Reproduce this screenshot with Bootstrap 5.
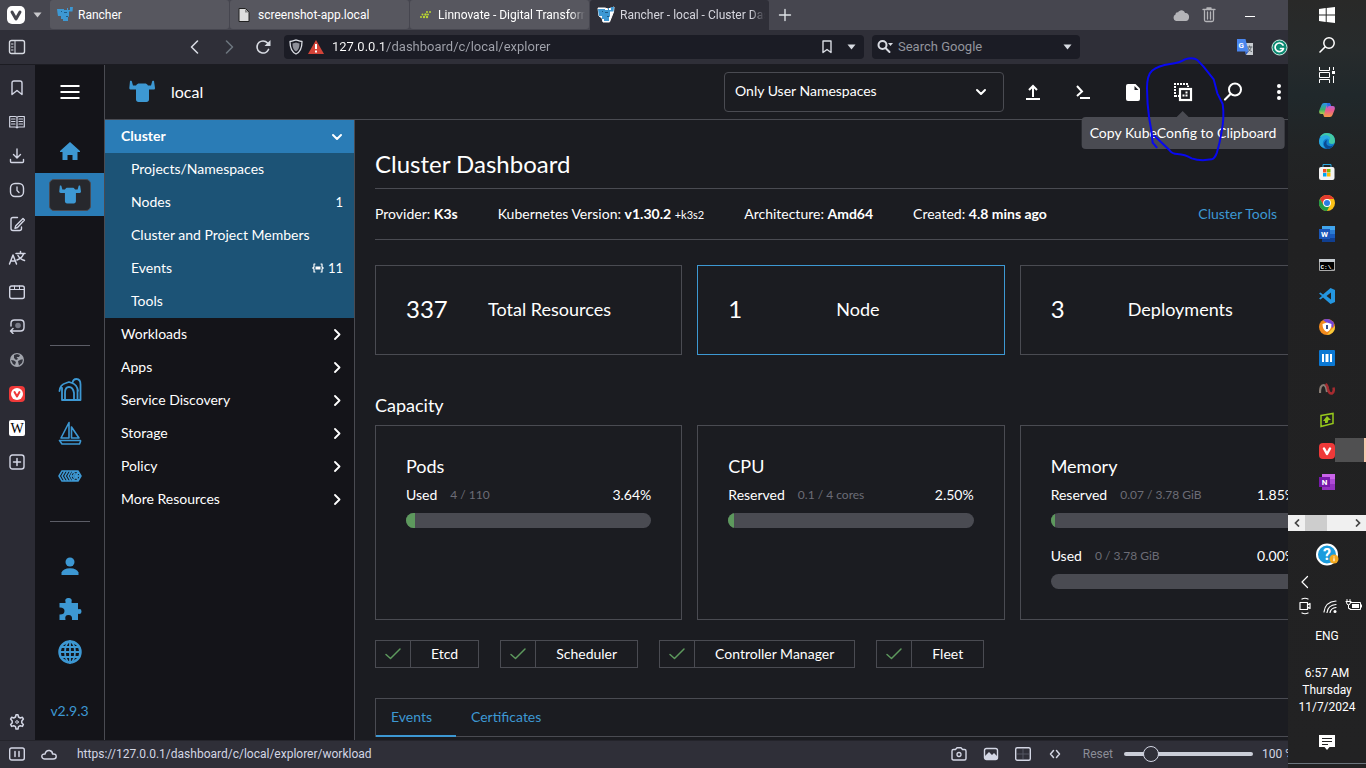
<!DOCTYPE html>
<html lang="en" data-bs-theme="dark">
<head>
<meta charset="utf-8">
<meta name="viewport" content="width=device-width, initial-scale=1">
<title>Rancher - local - Cluster Dashboard</title>
<link rel="stylesheet" href="https://cdn.jsdelivr.net/npm/bootstrap@5.3.0/dist/css/bootstrap.min.css">
<style>
:root{--line:#4a4b52;--page:#1b1c21;--rail:#141419;--chrome:#2f2f38;--panel:#2b2b34;--blue:#3d98d3;--primary:#2a7cb6;--lato:Lato,"Open Sans",sans-serif;--ui:Roboto,"Open Sans",sans-serif}
body{font:12px/18px var(--ui);color:#fff;background:var(--page)}
svg{display:block;flex:none}
button{background:none;border:0;padding:0;color:inherit;font:inherit;display:flex;align-items:center;justify-content:center}
a{text-decoration:none;color:inherit}
h1,h2,h3,p,ul{margin:0;padding:0;font-weight:400}
ul{list-style:none}
.i16{width:16px;height:16px}.i18{width:18px;height:18px}.i20{width:20px;height:20px}.i24{width:24px;height:24px}.i26{width:26px;height:26px}
.ln{fill:none;stroke:currentColor;stroke-linecap:round;stroke-linejoin:round}
/* browser chrome */
.tabstrip{height:30px;background:#46464f}
.vmenu{width:50px;gap:8px;padding-left:7px;justify-content:flex-start}
.btab{width:179px;height:29px;background:#57575f;border-radius:3px;margin-right:1px;padding:0 4px 0 7px;gap:5px;justify-content:flex-start}
.btab.current{background:var(--chrome);height:30px;color:#d5d5dd;border-radius:3px 3px 0 0}
.btab span{white-space:nowrap;overflow:hidden}
.btab .fades{-webkit-mask-image:linear-gradient(90deg,#000 90%,transparent);mask-image:linear-gradient(90deg,#000 90%,transparent)}
.winbtns{margin-right:110px;gap:12px;color:#b4b4b8}
.toolbar{height:35px;background:var(--chrome);border-bottom:1px solid #1c1c22;color:#d8dbe2}
.navbtns{margin-left:152px;width:102px}
.navbtns button{width:34px}
.field{height:24px;background:#1b1c25;border-radius:4px}
.field input{background:transparent;border:0;outline:0;min-width:0;font:13px/20px var(--ui);color:#a2a4ad;padding:0}
.field input::placeholder{color:#93959d}
.urlbox{background:linear-gradient(90deg,#fff 53px,#a2a4ad 53px)!important;-webkit-background-clip:text!important;background-clip:text!important;-webkit-text-fill-color:transparent}
.searchbox{width:208px}
.exts{width:286px;padding-left:157px;gap:17px}
.panelbar{width:35px;background:var(--panel);color:#d3d6e4;padding:6px 0 1px}
.panelbar button{width:34px;height:34px}
.statusbar{height:28px;background:var(--chrome);border-top:1px solid #24242b;color:#d3d6e4;padding:0 72px 2px 1px}
.statusbar button{width:32px}
.zoomer{-webkit-appearance:none;appearance:none;width:129px;height:18px;background:transparent;margin:0 9px 0 11px}
.zoomer::-webkit-slider-runnable-track{height:4px;border-radius:2px;background:#cbced8}
.zoomer::-webkit-slider-thumb{-webkit-appearance:none;width:16px;height:16px;margin-top:-6px;border-radius:50%;background:var(--chrome);border:1px solid #d3d6e4}
/* dashboard */
.rancher{font-family:var(--lato);font-size:14px;line-height:20px}
.rail{width:70px;background:var(--rail);border-right:1px solid var(--line);color:var(--blue)}
.rail a,.rail>button{height:43px;display:flex;align-items:center;justify-content:center}
.rail .here{background:var(--primary)}
.here span{background:#27282d;border:1px solid #4a4b52;border-radius:5px;padding:4px 9px}
.rail .burger{height:54px;margin-bottom:11px;color:#fff}
.rail hr{width:40px;margin:24px auto 22px;border-color:#5c5d66;opacity:1}
.rail .here+hr{margin-top:129px}
.apphead{height:55px;border-bottom:1px solid var(--line)}
.apphead h2{font-size:16px;line-height:20px}
.nsbtn{width:280px;height:40px;border:1px solid var(--line);border-radius:4px;padding:0 16px 2px 10px;margin-right:4px;justify-content:space-between}
.hbtn{width:50px;height:54px;position:relative}
.hbtn.dots{width:42px;margin-right:66px}
.tipbox{position:absolute;top:52px;left:50%;transform:translateX(-50%);background:#4a4b52;border-radius:4px;padding:6px 8px;white-space:nowrap;z-index:3}
.tipbox::before{content:"";position:absolute;left:50%;top:-6px;margin-left:-6px;border:6px solid transparent;border-top:0;border-bottom-color:#4a4b52}
.sidenav{width:250px;background:var(--rail);border-right:1px solid var(--line)}
.sidenav a{display:flex;align-items:center;justify-content:space-between;height:33px;padding:0 11px 2px 16px}
.sidenav ul ul{background:#1c5376}
.sidenav ul ul a{padding:0 11px 2px 26px}
.sidenav .open{background:var(--primary);font-weight:700}
.sidenav small{font-size:13px}
.pane{padding:29px 19px 0 20px;margin-right:20px}
.pane h1{font-size:24px;line-height:30px;padding-bottom:9px;border-bottom:1px solid var(--line)}
.facts{height:51px;gap:40px;border-bottom:1px solid var(--line);margin-bottom:25px}
.facts a{color:var(--blue);margin-right:50px}
.facts small{font-size:11px}
.tiles{display:grid;grid-template-columns:repeat(3,1fr);gap:15px}
.tile{border:1px solid var(--line)}
.total{height:90px;padding:0 30px 2px;font-size:18px}
.total.active{border-color:var(--blue)}
.total b{font-size:24px;font-weight:400}
.blk{font-size:18px;line-height:20px;margin:40px 0 10px}
.meter{height:195px;padding:29px 30px}
.meter h3{font-size:18px;line-height:22px;margin-bottom:8px}
.meter .d-flex{line-height:20px;margin-bottom:8px}
.meter small{font-size:12px;color:#6c6c76;margin-left:13px}
.pbar{height:15px;border-radius:8px;background:#4a4b52;overflow:hidden;margin-bottom:18px}
.pbar div{height:100%;background:#5d995d}
.svcs{gap:21px;margin-top:20px}
.svc{height:28px;border:1px solid var(--line)}
.svc svg{width:35px;height:26px;border-right:1px solid var(--line);padding:4px 8px;color:#5d995d}
.svc span{padding:0 20px}
.tabset{border:1px solid var(--line);border-bottom:0;margin-top:30px;color:var(--blue)}
.tabset div{border-bottom:1px solid var(--line)}
.tabset a{height:38px;padding:8px 15px;margin-bottom:-1px}
.tabset .on{width:80px;border-bottom:2px solid var(--blue)}
/* system taskbar */
.taskbar{position:absolute;right:0;top:0;bottom:0;width:78px;background:linear-gradient(#292928 0,#272b2c 50px,#20282b 95px,#222425 150px,#212122 220px,#222223 100%);z-index:5}
.taskbar .sys{height:30px;width:78px}
.taskbar .app{height:31px;width:78px;position:relative}
.app.running::after{content:"";position:absolute;left:47px;right:0;top:3px;height:24px;background:#505051;border-right:2px solid #f8c9ad}
.hscroll{height:16px;background:#f0f0f0;margin-top:18px;color:#555}
.hscroll i{width:22px;height:16px;background:#cdcdcd;margin-right:22px}
.hscroll button{width:17px}
.clock{line-height:17px;margin-top:20px}
.pen{position:absolute;top:55px;right:139px;width:84px;height:108px;z-index:6;pointer-events:none}
</style>
</head>
<body>
<svg class="position-absolute" width="0" height="0" xmlns="http://www.w3.org/2000/svg">
<linearGradient id="cpa" x1="0" y1="0" x2="0" y2="1"><stop offset="0" stop-color="#2a8ff0"/><stop offset=".5" stop-color="#35b46c"/><stop offset="1" stop-color="#f4d13c"/></linearGradient>
<linearGradient id="cpb" x1="0" y1="0" x2="0" y2="1"><stop offset="0" stop-color="#a765e6"/><stop offset=".5" stop-color="#e95b90"/><stop offset="1" stop-color="#f59a45"/></linearGradient>
<symbol id="bull" viewBox="0 0 26 24"><path fill="currentColor" d="M1 1c1-.6 2 0 2 1l1 3.500h3C8 4 9 3.500 10 3.500h6c1.200 0 2 .5 3 2h3l1-3.500c0-1 1-1.600 2-1l1 7c0 1-.5 1.500-1.500 1.500H20v10c0 1.500-1 2.500-2.500 2.500h-8C8 22 7 21 7 19.500v-10H2C1 9.500.3 9 .3 8z"/></symbol>
<symbol id="cow" viewBox="0 0 16 16"><path fill="#3d98d3" d="M0 2h7v1h3V1h1v2h2V0h1l2-.500-.5 5H12v5l-1 .5v4H6V12H4V9H1L.500 6z"/><path fill="#1d5b87" d="M4 4h1v1H4zM7 5h3v1H7zM9 9h2v1H9z"/></symbol>
<symbol id="mag" viewBox="0 0 20 20"><circle cx="12" cy="7.500" r="6" class="ln" stroke-width="2"/><path class="ln" stroke-width="2.200" d="M7.500 12L2 17.500"/></symbol>
<symbol id="cr" viewBox="0 0 12 12"><path class="ln" stroke-width="1.800" d="M4 2L8.500 6.500 4 11"/></symbol>
<symbol id="cd" viewBox="0 0 12 12"><path class="ln" stroke-width="2" d="M2 5l4 4 4-4"/></symbol>
<symbol id="ck" viewBox="0 0 18 18"><path class="ln" stroke-width="1.500" d="M2 9.500l4.500 4L16 4"/></symbol>
</svg>

<div class="position-relative vh-100 overflow-hidden">
<div class="d-flex flex-column h-100">

<header>
<div class="tabstrip d-flex">
 <button class="vmenu" aria-label="Vivaldi menu"><svg class="i18" viewBox="0 0 18 18"><rect width="18" height="18" rx="5" fill="#fff"/><path d="M5 6l4 7 4-7" class="ln" style="stroke:#46464f" stroke-width="3"/></svg><svg width="9" height="6" viewBox="0 0 9 6"><path fill="#c8c8cc" d="M.5.5h8l-4 5z"/></svg></button>
 <button class="btab"><svg class="i16"><use href="#cow"/></svg><span>Rancher</span></button>
 <button class="btab ps-2 gap-2"><svg width="12" height="14" viewBox="0 0 12 14"><path fill="#ddd" stroke="#222" d="M1 .5h6.500L11 4v9.500H1z"/><path fill="#888" d="M7 1v3.500h4z"/></svg><span>screenshot-app.local</span></button>
 <button class="btab"><svg class="i16" viewBox="0 0 16 16"><g fill="#b9d432"><circle cx="4" cy="10" r="1"/><circle cx="7" cy="10" r="1.200"/><circle cx="10" cy="10" r="1.200"/><circle cx="5.500" cy="7.500" r="1"/><circle cx="8.500" cy="7.500" r="1.200"/><circle cx="11" cy="7.500" r="1"/><circle cx="10" cy="5" r="1"/><circle cx="13" cy="5" r="1"/></g></svg><span class="fades">Linnovate - Digital Transform</span></button>
 <button class="btab current"><svg class="i18" viewBox="-1 -1 18 18"><path d="M0 1h7l3 1 6-2-.5 5-2 5-2 5H5L4 11 1 9z" fill="#fff" stroke="#fff"/><use href="#cow" width="16" height="16"/></svg><span class="fades">Rancher - local - Cluster Das</span></button>
 <button class="px-2 text-secondary-emphasis" aria-label="New tab"><svg width="14" height="14" viewBox="0 0 14 14"><path class="ln" d="M7 1.500v11M1.500 7h11" stroke-width="1.400"/></svg></button>
 <div class="winbtns d-flex ms-auto">
  <button aria-label="Sync"><svg width="18" height="14" viewBox="0 0 18 14"><path fill="currentColor" d="M4 13a3.500 3.500 0 01-.5-6.500C3.500 5 5 4 6 4.500 7 1.500 12 1 13 5c3 0 4.500 2 4 5-.4 2-1.500 3-3 3z"/></svg></button>
  <button aria-label="Closed tabs"><svg width="14" height="16" viewBox="0 0 14 16"><path class="ln" stroke-width="1.300" d="M1 2.500h12M5 2V1h4v1M2.500 4v9c0 1 .5 1.500 1.500 1.500h6c1 0 1.500-.5 1.500-1.500V4M5.500 5v7M8.500 5v7"/></svg></button>
  <button class="text-white ms-3" aria-label="Minimize"><svg width="12" height="12" viewBox="0 0 12 12"><path fill="currentColor" d="M1 7h10v1H1z"/></svg></button>
 </div>
</div>
<div class="toolbar d-flex align-items-center">
 <button class="ps-2" aria-label="Panels"><svg width="18" height="16" viewBox="0 0 18 16"><rect x="1.500" y="1.500" width="15" height="13" rx="2" class="ln" stroke-width="1.400"/><path class="ln" d="M7 2v12M3.500 5h1.500M3.500 8h1.500M3.500 11h1.500"/></svg></button>
 <div class="navbtns d-flex flex-shrink-0">
  <button aria-label="Back"><svg class="i16" viewBox="0 0 16 16"><path class="ln" stroke-width="1.600" d="M10.500 2L4.500 8l6 6"/></svg></button>
  <button class="text-secondary" aria-label="Forward"><svg class="i16" viewBox="0 0 16 16"><path class="ln" stroke-width="1.600" d="M5.500 2l6 6-6 6"/></svg></button>
  <button aria-label="Reload"><svg class="i16" viewBox="0 0 16 16"><path class="ln" stroke-width="1.700" d="M13.500 10.500A6 6 0 118 2c2 0 3.500.8 4.500 2"/><path fill="currentColor" d="M15.500 1v6h-6z"/></svg></button>
 </div>
 <div class="field d-flex align-items-center flex-fill ms-1 ps-1 gap-1 me-2">
  <svg class="i16" viewBox="0 0 16 16"><path class="ln" stroke-width="1.300" d="M2 2.500C5 2.500 7 1 8 1s3 1.500 6 1.500C14 9 12.500 13 8 15 3.500 13 2 9 2 2.500z"/><path fill="#8e9099" d="M4.500 4.500C6 4.500 7 3.500 8 3.500s2 1 3.500 1c0 4-1 6.500-3.500 8-2.500-1.500-3.500-4-3.500-8z"/></svg>
  <svg class="i16" viewBox="0 0 16 16"><path fill="#d34338" d="M8 1l8 14H0z"/><path stroke="#fff" stroke-width="2" d="M8 5v5M8 11.500v2"/></svg>
  <input class="urlbox flex-fill ms-1" aria-label="Address" value="127.0.0.1/dashboard/c/local/explorer">
  <button aria-label="Bookmark"><svg class="i16" viewBox="0 0 16 16"><path class="ln" stroke-width="1.400" d="M4 2h8v11.500L8 10.500l-4 3z"/></svg></button>
  <button class="px-2" aria-label="Bookmark list"><svg width="9" height="6" viewBox="0 0 9 6"><path fill="currentColor" d="M.5.5h8l-4 5z"/></svg></button>
 </div>
 <div class="field searchbox d-flex align-items-center ps-1">
  <svg width="18" height="16" viewBox="0 0 18 16"><circle cx="6.500" cy="6" r="4" class="ln" stroke-width="2"/><path class="ln" stroke-width="2" d="M9.500 9l4 4"/><path fill="currentColor" d="M12 4h5l-2.500 3z"/></svg>
  <input class="flex-fill ms-1" aria-label="Search" placeholder="Search Google">
  <button class="px-2" aria-label="Search engines"><svg width="9" height="6" viewBox="0 0 9 6"><path fill="currentColor" d="M.5.5h8l-4 5z"/></svg></button>
 </div>
 <div class="exts d-flex">
  <button aria-label="Translate"><svg width="17" height="17" viewBox="0 0 17 17"><path fill="#c9ccd1" d="M7 4h9v12H9z"/><path class="ln" style="stroke:#5e666c" d="M10 8h5M12.500 7v1M14 8c0 2-1.500 4-3 4.500M11 9c.5 1.500 2 3 3.500 3.500"/><path fill="#4a86ee" d="M0 0h8.500l3 12.500H0z"/><path fill="#2b5fc9" d="M9 16l2.500-3.500H8z"/><text x="1.500" y="9" font-size="8" font-weight="700" fill="#fff">G</text></svg></button>
  <button aria-label="Grammarly"><svg width="17" height="17" viewBox="0 0 17 17"><circle cx="8.500" cy="8.500" r="7.500" fill="#0c8a72" stroke="#cdeee4"/><path class="ln" style="stroke:#fff" stroke-width="1.700" d="M12 6a4.300 4.300 0 10.500 3.500H9.500"/></svg></button>
 </div>
</div>
</header>

<div class="d-flex flex-fill overflow-hidden">
<aside class="panelbar d-flex flex-column flex-shrink-0" aria-label="Panels">
 <button aria-label="Bookmarks"><svg class="i16" viewBox="0 0 16 16"><path class="ln" stroke-width="1.400" d="M3 3q0-2 2-2h6q2 0 2 2v11.500L8 10.500l-5 4z"/></svg></button>
 <button aria-label="Reading list"><svg class="i16" viewBox="0 0 16 16"><path class="ln" stroke-width="1.200" d="M.7 2.500h5.500q1.800 0 1.800 1v10.500q0-1-1.800-1H.7zM15.300 2.500H9.800Q8 2.500 8 3.500M15.300 2.500V13H9.800Q8 13 8 14M2.500 5H6M2.500 7.500H6M2.500 10H6M10 5h3.500M10 7.500h3.500M10 10h3.500"/></svg></button>
 <button aria-label="Downloads"><svg class="i16" viewBox="0 0 16 16"><path class="ln" stroke-width="1.400" d="M8 1v8.500M4.500 6.500L8 10l3.500-3.500M1.500 11.500v2q0 1 1 1h11q1 0 1-1v-2"/></svg></button>
 <button aria-label="History"><svg class="i16" viewBox="0 0 16 16"><rect x="1.500" y="1.500" width="13" height="13" rx="4.500" class="ln" stroke-width="1.400"/><path class="ln" stroke-width="1.300" d="M8 5v3.500l2 2"/></svg></button>
 <button aria-label="Notes"><svg class="i16" viewBox="0 0 16 16"><path class="ln" stroke-width="1.400" d="M8.500 1.500H4q-2 0-2 2v9q0 2 2 2h6.500q2 0 2-2V11M14 2.500l1.500 1.500-7 7.500-2.500.8.800-2.500z"/></svg></button>
 <button aria-label="Translate"><svg class="i18" viewBox="0 0 18 18"><path class="ln" stroke-width="1.500" d="M1.500 15l3.500-9 3.500 9M2.700 12h4.600M8 4.500h9M12.500 2.500v2M9 11c4-1.500 6-4 6.500-6.500M10 6.500c1 2 3.500 4 6.500 5"/></svg></button>
 <button aria-label="Window"><svg class="i16" viewBox="0 0 16 16"><rect x=".7" y="2" width="14.600" height="12.500" rx="2" class="ln" stroke-width="1.400"/><path class="ln" d="M1 5.500h14M5.500 2v3M10.500 2v3"/></svg></button>
 <button aria-label="Sessions"><svg class="i16" viewBox="0 0 16 16"><path class="ln" stroke-width="1.400" d="M2 8V5.500Q2 2 5.500 2h6Q15 2 15 5.500v4Q15 13 11.500 13H2M4 10.500L1.500 13 4 15.500"/><circle cx="9" cy="7.500" r="2.800" fill="#777985"/></svg></button>
 <button aria-label="Web panel"><svg class="i16" viewBox="0 0 16 16"><circle cx="8" cy="8" r="7" fill="#a2a5ad"/><path fill="#33343d" d="M2 8l3 .5 2 1.500-1 3-2-1zM5 3l3-1 3 1-1 2H7.500L9 7 7 8 5 6zM9 9l3-1.500h2L13 11l-3 2.500-.5-2z"/></svg></button>
 <button aria-label="Vivaldi"><svg class="i16" viewBox="0 0 16 16"><rect width="16" height="16" rx="4" fill="#ef3939"/><circle cx="8" cy="8" r="6" fill="#fff"/><path class="ln" style="stroke:#ef3939" stroke-width="2" d="M5.500 6L8 10.500 10.500 6"/></svg></button>
 <button aria-label="Wikipedia"><svg class="i16" viewBox="0 0 16 16"><rect width="16" height="16" rx="2" fill="#fff"/><text x="8" y="12.500" font-family="Liberation Serif" font-size="14" text-anchor="middle" fill="#000">W</text></svg></button>
 <button aria-label="Add panel"><svg class="i16" viewBox="0 0 16 16"><rect x="1" y="1" width="14" height="14" rx="2.500" class="ln" stroke-width="1.400"/><path class="ln" stroke-width="1.500" d="M8 4.500v7M4.500 8h7"/></svg></button>
 <button class="mt-auto" aria-label="Settings"><svg class="i16" viewBox="0 0 16 16"><path class="ln" stroke-width="1.500" d="M6.500 3L7 .8h2L9.500 3l1.800 1 2.100-.7 1 1.800L12.800 7v2l1.600 1.500-1 1.900-2.100-.7-1.800 1-.5 2.300H7l-.5-2.300-1.800-1-2.100.7-1-1.900L3.200 9V7L1.600 5.100l1-1.800 2.100.7z"/><circle cx="8" cy="8" r="1.300" class="ln"/></svg></button>
</aside>

<div class="rancher d-flex flex-fill">
<nav class="rail d-flex flex-column flex-shrink-0" aria-label="Global">
 <button class="burger" aria-label="Menu"><svg width="20" height="14" viewBox="0 0 20 14"><path fill="currentColor" d="M.5 0h19v2H.5zM.5 6h19v2H.5zM.5 12h19v2H.5z"/></svg></button>
 <a href="#" aria-label="Home"><svg width="22" height="20" viewBox="0 0 22 20"><path fill="currentColor" d="M11 0l10 9v1h-2.500v8h-5v-5h-5v5h-5v-8H1V9z"/></svg></a>
 <a href="#" class="here" aria-label="local"><span><svg width="22" height="22"><use href="#bull"/></svg></span></a>
 <hr>
 <a href="#" aria-label="Harvester"><svg class="i24" viewBox="0 0 24 24"><path class="ln" stroke-width="1.800" d="M1.500 13Q2 6.500 8 5l3-1 3 1q5 1.500 6 8M4 10v12h18.500V6.500Q22.500 1 18.500 1 15 1 14.500 5M7 21.500V15q0-6 4-6t5 6v6.500M19.500 11v10.500"/></svg></a>
 <a href="#" aria-label="Continuous Delivery"><svg class="i24" viewBox="0 0 24 24"><path class="ln" stroke-width="1.600" d="M11 1.500v15.500H3zM13.500 6v11h7.500zM1.500 19.500h21v1l-1 2.500H4z"/></svg></a>
 <a href="#" aria-label="Elemental"><svg class="i24" viewBox="0 0 24 24"><path class="ln" stroke-width="1.500" d="M4 7l-3 5 3 5M7 7l-3 5 3 5M10 7l-3 5 3 5M13 7l-3 5 3 5M4 7h16l3 5-3 5H4M15 7.500l-2.500 4.500 2.500 4.500h5l2.500-4.500L20 7.500zM13 12h10M15.500 8l4.500 8M20 8l-4.500 8"/><circle cx="17.500" cy="12" r="2.500" class="ln"/></svg></a>
 <hr>
 <a href="#" aria-label="Users"><svg class="i20" viewBox="0 0 20 20"><circle cx="10" cy="6" r="4.500" fill="currentColor"/><path fill="currentColor" d="M1.500 19v-2.500Q3 12.500 10 12.300q7 .2 8.500 4.200V19z"/></svg></a>
 <a href="#" aria-label="Extensions"><svg class="i24" viewBox="0 0 24 24"><path fill="currentColor" d="M1.500 6h5.500q1 0 .6-1C6.500 2 8.500 1 10.500 1s4 1 3 4q-.3 1 .7 1H20v5.500q0 1 1 .7 2.500-.5 2.500 2.300t-2.500 2.300q-1-.3-1 .7V23h-6q.7-5-3.500-5T7.500 23h-6v-5.500q5 .2 5-3.500t-5-3.500z"/></svg></a>
 <a href="#" aria-label="Global settings"><svg class="i24" viewBox="0 0 24 24"><circle cx="12" cy="12" r="10.500" class="ln" stroke-width="2.500"/><path class="ln" stroke-width="1.800" d="M12 1v22M2 12h20M3.500 7h17M3.500 17h17"/><ellipse cx="12" cy="12" rx="5" ry="10.500" class="ln" stroke-width="1.800"/></svg></a>
 <a href="#" class="mt-3">v2.9.3</a>
</nav>

<div class="d-flex flex-column flex-fill">
<div class="apphead d-flex align-items-center flex-shrink-0 ps-4">
 <svg class="i26" color="#3d98d3"><use href="#bull"/></svg>
 <h2 class="ms-3 me-auto">local</h2>
 <button class="nsbtn">Only User Namespaces<svg width="12" height="12"><use href="#cd"/></svg></button>
 <button class="hbtn" aria-label="Import YAML"><svg class="i16" viewBox="0 0 16 16"><path fill="none" stroke="currentColor" stroke-width="2" d="M8 13V2M4 6l4-4 4 4M1 15h14"/></svg></button>
 <button class="hbtn" aria-label="Kubectl Shell"><svg class="i16" viewBox="0 0 16 16"><path fill="none" stroke="currentColor" stroke-width="2" d="M2 2l5 5.500L2 12M5 14h10"/></svg></button>
 <button class="hbtn" aria-label="Download KubeConfig"><svg width="14" height="17" viewBox="0 0 14 17"><path fill="currentColor" d="M2 0h7.500L14 4.500V15q0 2-2 2H2q-2 0-2-2V2Q0 0 2 0z"/><path fill="#1b1c21" d="M8.500 2v4h4z"/></svg></button>
 <button class="hbtn" aria-label="Copy KubeConfig"><svg class="i20" viewBox="0 0 20 20"><path fill="none" stroke="currentColor" stroke-width="2" stroke-dasharray="2 1" d="M1 2h15M2 4v11M2 14h4"/><rect x="7" y="7" width="11" height="11" fill="none" stroke="currentColor" stroke-width="2.200"/><path fill="currentColor" d="M9.500 12.500h2v2h-2zM12.500 12.500h2v2h-2zM12.500 9.500h2v2h-2zM14 3.500h2V5h-2z"/></svg><span class="tipbox" role="tooltip">Copy KubeConfig to Clipboard</span></button>
 <button class="hbtn" aria-label="Search"><svg class="i20"><use href="#mag"/></svg></button>
 <button class="hbtn dots" aria-label="More"><svg width="4" height="16" viewBox="0 0 4 16"><g fill="currentColor"><circle cx="2" cy="2" r="2"/><circle cx="2" cy="8" r="2"/><circle cx="2" cy="14" r="2"/></g></svg></button>
</div>

<div class="d-flex flex-fill">
<nav class="sidenav flex-shrink-0" aria-label="Cluster">
 <ul>
  <li><a href="#" class="open">Cluster<svg width="12" height="12"><use href="#cd"/></svg></a>
   <ul>
    <li><a href="#">Projects/Namespaces</a></li>
    <li><a href="#">Nodes<small>1</small></a></li>
    <li><a href="#">Cluster and Project Members</a></li>
    <li><a href="#">Events<small class="d-flex align-items-center gap-1"><svg width="12" height="10" viewBox="0 0 12 10"><path class="ln" stroke-width="1.200" d="M3 1H2v3L.8 5 2 6v3h1M9 1h1v3l1.200 1L10 6v3H9"/><path fill="currentColor" d="M3.500 3.500h5v3h-5z"/></svg>11</small></a></li>
    <li><a href="#">Tools</a></li>
   </ul></li>
  <li><a href="#">Workloads<svg width="12" height="12"><use href="#cr"/></svg></a></li>
  <li><a href="#">Apps<svg width="12" height="12"><use href="#cr"/></svg></a></li>
  <li><a href="#">Service Discovery<svg width="12" height="12"><use href="#cr"/></svg></a></li>
  <li><a href="#">Storage<svg width="12" height="12"><use href="#cr"/></svg></a></li>
  <li><a href="#">Policy<svg width="12" height="12"><use href="#cr"/></svg></a></li>
  <li><a href="#">More Resources<svg width="12" height="12"><use href="#cr"/></svg></a></li>
 </ul>
</nav>

<main class="pane flex-fill">
 <h1>Cluster Dashboard</h1>
 <div class="facts d-flex align-items-center">
  <span>Provider: <b>K3s</b></span>
  <span>Kubernetes Version: <b>v1.30.2</b> <small>+k3s2</small></span>
  <span>Architecture: <b>Amd64</b></span>
  <span>Created: <b>4.8 mins ago</b></span>
  <a href="#" class="ms-auto">Cluster Tools</a>
 </div>
 <div class="tiles">
  <a href="#" class="tile total d-flex align-items-center"><b>337</b><span class="flex-fill text-center">Total Resources</span></a>
  <a href="#" class="tile total active d-flex align-items-center"><b>1</b><span class="flex-fill text-center">Node</span></a>
  <a href="#" class="tile total d-flex align-items-center"><b>3</b><span class="flex-fill text-center">Deployments</span></a>
 </div>
 <h2 class="blk">Capacity</h2>
 <div class="tiles">
  <section class="tile meter"><h3>Pods</h3>
   <div class="d-flex">Used<small>4 / 110</small><span class="ms-auto">3.64%</span></div>
   <div class="pbar"><div style="width:3.64%"></div></div></section>
  <section class="tile meter"><h3>CPU</h3>
   <div class="d-flex">Reserved<small>0.1 / 4 cores</small><span class="ms-auto">2.50%</span></div>
   <div class="pbar"><div style="width:2.5%"></div></div></section>
  <section class="tile meter"><h3>Memory</h3>
   <div class="d-flex">Reserved<small>0.07 / 3.78 GiB</small><span class="ms-auto">1.85%</span></div>
   <div class="pbar"><div style="width:1.85%"></div></div>
   <div class="d-flex">Used<small>0 / 3.78 GiB</small><span class="ms-auto">0.00%</span></div>
   <div class="pbar"></div></section>
 </div>
 <div class="d-flex svcs">
  <div class="svc d-flex align-items-center"><svg><use href="#ck"/></svg><span>Etcd</span></div>
  <div class="svc d-flex align-items-center"><svg><use href="#ck"/></svg><span>Scheduler</span></div>
  <div class="svc d-flex align-items-center"><svg><use href="#ck"/></svg><span>Controller Manager</span></div>
  <div class="svc d-flex align-items-center"><svg><use href="#ck"/></svg><span>Fleet</span></div>
 </div>
 <div class="tabset"><div class="d-flex"><a href="#" class="on">Events</a><a href="#">Certificates</a></div></div>
</main>
</div>
</div>
</div>
</div>

<footer class="statusbar d-flex align-items-center flex-shrink-0">
 <button aria-label="Pause"><svg class="i16" viewBox="0 0 16 16"><rect x=".7" y="2" width="14.600" height="12" rx="2" class="ln" stroke-width="1.400"/><path class="ln" stroke-width="1.500" d="M6 5.500v5M10 5.500v5"/></svg></button>
 <button aria-label="Sync"><svg class="i16" viewBox="0 0 16 16"><path class="ln" stroke-width="1.400" d="M3.500 13q-2.700-.3-2.700-2.700T4 8q1-4 4.500-3.500 3 .5 3 3.500 3.700-.5 3.700 2.500 0 2.500-3 2.500z"/></svg></button>
 <span class="ms-2 ps-1 me-auto">https://127.0.0.1/dashboard/c/local/explorer/workload</span>
 <button aria-label="Capture"><svg class="i16" viewBox="0 0 16 16"><path class="ln" stroke-width="1.400" d="M1 5q0-1.500 1.500-1.500h2L6 1.800h4l1.500 1.700h2Q15 3.500 15 5v7.500q0 1.500-1.500 1.500h-11Q1 14 1 12.500z"/><circle cx="8" cy="8.500" r="2" class="ln" stroke-width="1.300"/></svg></button>
 <button aria-label="Images"><svg class="i16" viewBox="0 0 16 16"><rect x="1.500" y="2.500" width="13" height="11" rx="2" class="ln" stroke-width="1.400"/><path fill="currentColor" d="M2 10l4-4 3 3 2-2 3.500 3.500V13H2z"/></svg></button>
 <button aria-label="Tiling"><svg class="i16" viewBox="0 0 16 16"><rect x=".7" y="1.700" width="14.600" height="12.600" rx="1.500" class="ln" stroke-width="1.400"/><path stroke="#555762" d="M8 3v10M2 8h12"/></svg></button>
 <button aria-label="Page actions"><svg width="12" height="12" viewBox="0 0 12 12"><path class="ln" stroke-width="1.500" d="M4.500 2.500L1.500 6l3 3.500M7.500 2.500l3 3.500-3 3.500"/></svg></button>
 <span class="ps-1 ms-2" style="color:#8b8d97">Reset</span>
 <input type="range" class="zoomer" aria-label="Zoom" min="20" max="500" value="100">
 <span>100 %</span>
</footer>
</div>

<aside class="taskbar d-flex flex-column align-items-center" aria-label="Taskbar">
 <button class="sys" aria-label="Start"><svg class="i16" viewBox="0 0 16 16"><path fill="#fff" d="M0 2l6.700-1v6.500H0zM7.700.9L16 0v7.500H7.700zM0 8.500h6.700V15L0 14zM7.700 8.500H16V16l-8.300-1z"/></svg></button>
 <button class="sys" aria-label="Search"><svg class="i16" viewBox="0 0 16 16"><circle cx="10" cy="6" r="5.200" class="ln" stroke-width="1.500"/><path class="ln" stroke-width="1.600" d="M6 10L1 15"/></svg></button>
 <button class="sys" aria-label="Task view"><svg class="i16" viewBox="0 0 16 16"><path fill="none" stroke="#fff" d="M.5 0v3.500h10V0M.5 16v-3.500h10V16M.5 5.500h10v5H.5zM14.500 0v3M14.500 9v7"/><path fill="#fff" d="M13 4h3v3h-3z"/></svg></button>
 <button class="app mt-1" aria-label="Copilot"><svg class="i16" viewBox="0 0 16 16"><path fill="url(#cpa)" d="M5 1h5q1.500 0 1.200 1.500L9 11q-1 3-3 3-1.500 0-2-2H2Q-.5 12 .3 8.500L2.500 3Q3.300 1 5 1z"/><path fill="url(#cpb)" d="M11 15H6q-1.500 0-1.200-1.500L7 5q1-3 3-3 1.500 0 2 2h2q2.500 0 1.700 3.500L13.500 13q-.8 2-2.500 2z"/><path fill="#2a6ae0" d="M8 1h2.500q1 .3 1.500 3H9.500L8.500 6z"/></svg></button>
 <button class="app" aria-label="Edge"><svg class="i16" viewBox="0 0 16 16"><circle cx="8" cy="8" r="8" fill="#1180d0"/><path fill="#43c9a5" d="M1 4Q4-1 10 .3 16 2 16 8q0 3-3 3-4 0-3-3Q10 4 5 4z"/><path fill="#29a9e0" d="M0 8q1-6 7-6 5 1 4 5-3-3-6 0-3 4 1 8Q0 14 0 8z"/><path fill="#0a4b91" d="M8 7q-2 5 2 6 3 .5 4.500-1Q12 16 8 16 4 13 5 10q1-3 3-3z"/></svg></button>
 <button class="app" aria-label="Store"><svg class="i16" viewBox="0 0 16 16"><path fill="none" stroke="#2aa8e0" d="M4 4V.5h8V4"/><rect y="3" width="15.500" height="13" rx="2" fill="#f3f3f3"/><path fill="#f25022" d="M4 5h3.500v3.500H4z"/><path fill="#7fba00" d="M8 5h3.500v3.500H8z"/><path fill="#00a4ef" d="M4 9h3.500v3.500H4z"/><path fill="#ffb900" d="M8 9h3.500v3.500H8z"/></svg></button>
 <button class="app" aria-label="Chrome"><svg class="i16" viewBox="0 0 16 16"><circle cx="8" cy="8" r="8" fill="#fbc116"/><path fill="#e33b2e" d="M1 4a8 8 0 0114 0H8L4.600 10z"/><path fill="#229b48" d="M1 4l3.500 6 6.500 0-3 6A8 8 0 011 4z"/><circle cx="8" cy="8" r="3.900" fill="#fff"/><circle cx="8" cy="8" r="3" fill="#2a7de1"/></svg></button>
 <button class="app" aria-label="Word"><svg class="i16" viewBox="0 0 16 16"><path fill="#41a5ee" d="M3 0h13v4H3z"/><path fill="#2b7cd3" d="M3 4h13v4H3z"/><path fill="#185abd" d="M3 8h13v4H3z"/><path fill="#103f91" d="M3 12h13v4H3z"/><path fill="#1a56b8" d="M0 3h11v10H0z"/><text x="5.500" y="11" font-size="8" font-weight="700" text-anchor="middle" fill="#fff">W</text></svg></button>
 <button class="app" aria-label="Command Prompt"><svg class="i16" viewBox="0 0 16 16"><path fill="#000" stroke="#aaa" d="M.5 2.500h15v11H.500z"/><path fill="#c5cbd0" d="M0 2h16v3H0z"/><text x="1.500" y="11.500" font-family="Liberation Mono" font-size="6" font-weight="700" fill="#fff">C:\_</text></svg></button>
 <button class="app" aria-label="VS Code"><svg class="i16" viewBox="0 0 16 16"><path fill="#2496e0" d="M11.500 0L16 2v12l-4.500 2L4 9.500 1.500 11.500 0 10.500 3 8 0 5.500l1.500-1L4 6.500zM12 4.500L7.500 8l4.500 3.500z"/></svg></button>
 <button class="app" aria-label="Secure browser"><svg class="i16" viewBox="0 0 16 16"><circle cx="8" cy="8" r="8" fill="#f28a1d"/><path fill="#7445d8" d="M4 1q6-3 11 3l-1 5-5-4z"/><path fill="#f5cb3b" d="M8 16q8-1 8-9l-4 4z"/><path fill="#fff" d="M8 3.500l4.500 1.500q0 6-4.500 8-4.500-2-4.500-8z"/><path fill="#36508c" d="M7 6h2v4H7z"/></svg></button>
 <button class="app" aria-label="Boards"><svg class="i16" viewBox="0 0 16 16"><rect width="16" height="16" rx="1" fill="#0b78d3"/><path fill="#fff" d="M3 4h2v8H3zM6.500 4h3v8h-3zM11 4h2v8h-2z"/></svg></button>
 <button class="app" aria-label="Network tool"><svg class="i16" viewBox="0 0 16 16"><path fill="none" stroke="#897d75" stroke-width="2.200" d="M1 12Q1 4 4.500 4 7 4 8 11"/><path fill="none" stroke="#a62b30" stroke-width="2.500" d="M6.500 3q2 1 2.500 5 1 5 4 4.500 2.500-1.500 1.500-6"/></svg></button>
 <button class="app" aria-label="Sharing"><svg class="i16" viewBox="0 0 16 16"><path fill="none" stroke="#97c91c" stroke-width="1.500" d="M2 3.500l12-2v10l-12 3z"/><path fill="#97c91c" d="M8 4l4 4H9.500l-1 3H6V9H4z"/></svg></button>
 <button class="app running" aria-label="Vivaldi"><svg class="i16" viewBox="0 0 16 16"><rect width="16" height="16" rx="4" fill="#ef3939"/><path d="M5 5.500l3 5.500 3-5.500" class="ln" style="stroke:#fff" stroke-width="2.500"/></svg></button>
 <button class="app" aria-label="OneNote"><svg class="i16" viewBox="0 0 16 16"><path fill="#ca64ea" d="M3 0h13v5H3z"/><path fill="#ae4bd5" d="M3 5h13v5H3z"/><path fill="#9332bf" d="M3 10h13v6H3z"/><path fill="#7719aa" d="M0 3h11v10H0z"/><text x="5.500" y="11" font-size="8" font-weight="700" text-anchor="middle" fill="#fff">N</text></svg></button>
 <div class="hscroll d-flex align-self-stretch justify-content-between"><button aria-label="Scroll left"><svg width="8" height="8" viewBox="0 0 8 8"><path fill="none" stroke="#444" stroke-width="1.700" d="M6 0.500L2.500 4 6 7.500"/></svg></button><i></i><button aria-label="Scroll right"><svg width="8" height="8" viewBox="0 0 8 8"><path fill="none" stroke="#444" stroke-width="1.700" d="M2 .500L5.500 4 2 7.500"/></svg></button></div>
 <button class="mt-2 pt-1" aria-label="Help"><svg width="24" height="24" viewBox="0 0 24 24"><circle cx="12" cy="11.500" r="10" fill="#1b9cdd" stroke="#fff" stroke-width="2"/><text x="12" y="17" font-size="16" font-weight="700" text-anchor="middle" fill="#fff">?</text><circle cx="19" cy="16" r="4.500" fill="#f2a81e"/><path stroke="#fff" stroke-width="1.200" d="M19 13.500v1M19 15.300v3"/></svg></button>
 <button class="align-self-start ps-2 ms-1 mt-2" aria-label="Hidden icons"><svg width="9" height="14" viewBox="0 0 9 14"><path class="ln" stroke-width="1.200" d="M7.500 1.500L2 7l5.500 5.500"/></svg></button>
 <div class="d-flex align-self-stretch justify-content-between ps-2 pe-1 mt-2">
  <svg width="18" height="18" viewBox="0 0 18 18"><path class="ln" stroke-width="1.200" d="M6 2q3-1.500 6 0M6 16q3 1.500 6 0M4 5.500h7.500v7H4zM11.500 8L14 6.500v5L11.500 10"/></svg>
  <svg width="16" height="18" viewBox="0 0 16 18"><path class="ln" stroke-width="1.200" d="M2 15Q3 5 14 4M5 15.500Q6 8 14 7.500M8 15.500Q9 11 14 10.500"/><circle cx="13" cy="14.500" r="1.500" fill="#fff"/></svg>
  <svg width="17" height="18" viewBox="0 0 17 18"><path class="ln" d="M5.500 5.500h10v7H5M1 4.500h5M2 2.500v2M5 2.500v2M1.500 5q0 3 2 3t2-3M3.500 8v3.500H5"/><path fill="#fff" d="M7 7h7v4H7zM16 7.500h1v3h-1z"/></svg>
 </div>
 <span class="mt-2 pt-1">ENG</span>
 <div class="clock text-center">6:57 AM<br>Thursday<br>11/7/2024</div>
 <button class="mt-3" aria-label="Notifications"><svg width="18" height="20" viewBox="0 0 18 20"><path fill="#fff" d="M1 3h16v12H11.500L9 18l-2.500-3H1z"/><path stroke="#222" d="M4 6.500h10M4 9.500h10M4 12.500h6"/></svg></button>
 <div class="align-self-stretch border-top border-secondary mt-auto mb-1"></div>
</aside>

<svg class="pen" viewBox="849 165 252 324" aria-hidden="true"><path fill="none" stroke="#0808f0" stroke-width="6" stroke-linecap="round" stroke-linejoin="round" d="M890 442L878 428Q876 395 868 358 861 310 861 265 861 225 876 212 895 197 930 192 960 188 975 178 1000 170 1013 181L1030 199 1061 238 1072 280 1088 312Q1094 350 1084 400 1079 430 1071 457 1065 475 1055 478 1020 484 995 475 975 463 952 462 936 462 928 450L884 408"/></svg>
</div>
<script src="https://cdn.jsdelivr.net/npm/bootstrap@5.3.0/dist/js/bootstrap.bundle.min.js"></script>
</body>
</html>
